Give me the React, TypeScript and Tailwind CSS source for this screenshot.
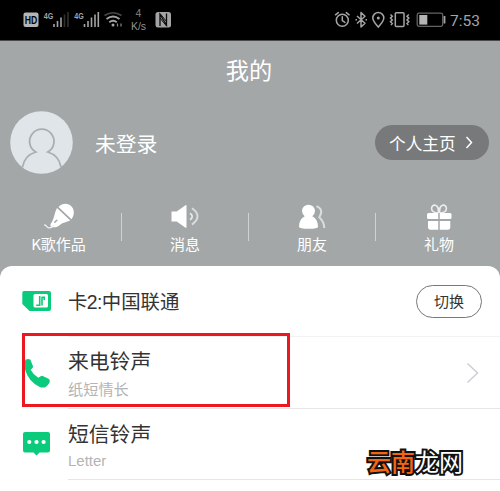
import React from 'react';

const StatusBar = () => (
  <div className="flex h-[41px] shrink-0 items-start justify-between border-b border-[#48494b] bg-black pl-[23px] pr-[16px] text-[#a4a4a4]">
    <svg width="150" height="40" viewBox="23 0 150 40" fill="none" stroke="currentColor">
      {/* HD */}
      <rect x="23.5" y="12.5" width="15" height="14.5" rx="2" fill="#b5b5b5" stroke="none" />
      <text x="31" y="23.8" textAnchor="middle" fontSize="10.5" fontWeight="700" fill="#050505" stroke="none" fontFamily="Liberation Sans, sans-serif" textLength="12.5" lengthAdjust="spacingAndGlyphs">HD</text>
      {/* First SIM */}
      <text x="43.8" y="18.5" fontSize="9.5" fontWeight="700" fill="currentColor" stroke="none" fontFamily="Liberation Sans, sans-serif" textLength="9.5" lengthAdjust="spacingAndGlyphs">4G</text>
      <g strokeWidth="1.6">
        <path d="M54 24v3M57.5 21v6M61 17.5V27" />
        <path d="M64.5 14.5V27M68 12v15" stroke="#303030" />
      </g>
      {/* Second SIM */}
      <text x="74.3" y="18.5" fontSize="9.5" fontWeight="700" fill="currentColor" stroke="none" fontFamily="Liberation Sans, sans-serif" textLength="9.5" lengthAdjust="spacingAndGlyphs">4G</text>
      <path d="M84.5 24v3M88 21v6M91.5 17.5V27M95 14.5V27M98.3 12v15" strokeWidth="1.6" />
      {/* Wifi */}
      <path d="M104.5 15.5q8.5-5.5 17 0" stroke="#484848" strokeWidth="1.5" />
      <path d="M106.5 19q6.5-5 13 0M109.3 22.2q3.700-3 7.500 0" strokeWidth="1.8" />
      <circle cx="113" cy="25" r="1.5" fill="currentColor" stroke="none" />
      <path d="M117.5 23.5v3M121 23.5v3" strokeWidth="1.2" stroke="#8a8a8a" />
      <text x="138.5" y="17" textAnchor="middle" fontSize="10.5" fill="#858585" stroke="none" fontFamily="Liberation Sans, sans-serif">4</text>
      <text x="138.5" y="30" textAnchor="middle" fontSize="10.5" fill="#929292" stroke="none" fontFamily="Liberation Sans, sans-serif">K/s</text>
      {/* NFC */}
      <rect x="155.5" y="12" width="15.5" height="15.5" rx="2.5" fill="currentColor" stroke="none" />
      <path d="M160 26V14.5L166.5 25V13.5" stroke="#0a0a0a" strokeWidth="1.3" />
      <path d="M160 13.5l6.5 8M160 18l6.5 8" stroke="#0a0a0a" strokeWidth="1" />
    </svg>
    <svg width="150" height="40" viewBox="334 0 150 40" fill="none" stroke="currentColor">
      {/* Alarm */}
      <g strokeWidth="1.5" strokeLinecap="round">
        <circle cx="342.3" cy="20.3" r="6" />
        <path d="M342.3 16.8v3.8l2.6 1.8M335.5 14.8l2.8-2.2M349.1 14.8l-2.8-2.2" />
      </g>
      {/* Bluetooth */}
      <path d="M357 16l8 7.3-4 3.7V12.5l4 3.7-8 7.3" strokeWidth="1.5" strokeLinejoin="round" />
      <path d="M355.5 19.8h1.5M365.5 19.8h1.5" strokeWidth="1.5" />
      {/* Location */}
      <path d="M378.3 27c-2-2.7-5.5-5.5-5.5-9a5.5 5.5 0 0 1 11 0c0 3.5-3.5 6.3-5.5 9z" strokeWidth="1.5" />
      <circle cx="378.3" cy="18" r="1.5" fill="currentColor" stroke="none" />
      {/* Vibrate */}
      <rect x="395.3" y="12.8" width="8.7" height="13.7" rx="1" strokeWidth="1.5" />
      <path d="M390.5 14.5l1.8 1.8-1.8 1.8 1.8 1.8-1.8 1.8 1.8 1.8-1.3 1.6M408.8 14.5l-1.8 1.8 1.8 1.8-1.8 1.8 1.8 1.8-1.8 1.8 1.3 1.6" strokeWidth="1.5" />
      {/* Battery */}
      <rect x="417.2" y="13.2" width="25.5" height="13.2" rx="1.8" strokeWidth="1.3" stroke="#646464" />
      <rect x="419.3" y="15" width="8" height="9.6" fill="#b5b5b5" stroke="none" />
      <path d="M444.5 16v7.5" strokeWidth="1.8" />
      <text x="450" y="25.8" fontSize="15.5" fill="#a4a4a4" stroke="none" fontFamily="Roboto, sans-serif">7:53</text>
    </svg>
  </div>
);

const MicIcon = () => (
  <svg width="32" height="28" viewBox="42 203 32 28" fill="none">
    <path d="M57.5 207C61.5 202.5 67.500 203 70.5 206.500C73.700 210 73.500 215.300 70.500 219.300z" fill="#fff" />
    <path d="M56 208L69.300 220.500C65.500 222 61.500 222.700 59.500 224.500C57 227 54 227.600 51.500 227.200C48.800 226.800 49 224.500 50.500 222.500C53.300 218.500 53.500 212.500 56 208z" fill="#fff" />
    <path d="M53.800 222.300l2-2" stroke="#a3a7a8" strokeWidth="1.5" strokeLinecap="round" />
    <path d="M52.5 225.5q-2 2.500-4.500 2.300c-2.500-.2-2.200-2.500-4.300-2.800" stroke="#f0f1f1" strokeWidth="1.3" strokeLinecap="round" />
  </svg>
);

const SpeakerIcon = () => (
  <svg width="32" height="28" viewBox="169 203 32 28" fill="none">
    <path d="M171.5 211.5h5.2L185.5 205.2q1-.5 1 .6v21.4q0 1-1 .5l-8.8-6.2h-5.2z" fill="#fff" />
    <path d="M190 213.3q4.5 3.200 0 6.500" stroke="#e6e8e8" strokeWidth="1.8" />
    <path d="M192 208.3q11 7.700 0 16.300" stroke="#d9dbdc" strokeWidth="2" />
  </svg>
);

const FriendsIcon = () => (
  <svg width="32" height="28" viewBox="296 203 32 28" fill="none">
    <path d="M304.7 216.2q-2.7-2.3-2.7-5.500a6.500 6 0 0 1 13 0q0 3.200-2.700 5.500q5.700 2.800 5.700 10.500q0 2-9.300 2t-9.700-2q0-7.700 5.700-10.500z" fill="#fff" />
    <path d="M316.5 206.2q7.800 3.300 2.800 11q4.800 4.500 5 10.800" stroke="#dadcdd" strokeWidth="2" />
  </svg>
);

const GiftIcon = () => (
  <svg width="32" height="28" viewBox="423 203 32 28" fill="none">
    <path d="M438.5 213c-10-.5-7.500-9-3-7.800 3 .8 3 4 3 7.800zM439.500 213c10-.5 7.500-9 3-7.800-3 .8-3 4-3 7.800z" stroke="#eceded" strokeWidth="1.6" />
    <rect x="427" y="213" width="24.5" height="6" rx="1.5" fill="#fff" />
    <path d="M428 221h22.300v6q0 2.800-2.500 2.800h-17.300q-2.500 0-2.500-2.800z" fill="#fff" />
    <path d="M439 213v17" stroke="#a3a7a8" strokeWidth="1.5" />
  </svg>
);

const tabs = [
  { label: 'K歌作品', icon: <MicIcon /> },
  { label: '消息', icon: <SpeakerIcon /> },
  { label: '朋友', icon: <FriendsIcon /> },
  { label: '礼物', icon: <GiftIcon /> },
];

const Header = () => (
  <header className="h-[225px] shrink-0 text-white">
    <h1 className="pt-[12px] text-center text-[23.2px] leading-[32px] pr-[2px]">我的</h1>
    <div className="mt-[26px] flex h-[63px] items-center pl-[10px] pr-[11px]">
      <svg className="h-[63px] w-[63px]" viewBox="0 0 63 63" fill="none">
        <circle cx="31.5" cy="31.5" r="31.3" fill="#e0e5e9" />
        <path d="M12.5 56q2-11.500 13.300-15a12.200 12.200 0 1 1 12 0q11.200 3.500 13.200 15" stroke="#a8afb2" strokeWidth="1.8" />
      </svg>
      <span className="ml-[22px] text-[20.8px] leading-[30px]">未登录</span>
      <button className="ml-auto flex h-[35px] w-[114px] items-center rounded-full bg-[#78797b] pl-[14px] text-[16.7px] leading-[24px]">
        个人主页
        <svg className="ml-[9px]" width="8" height="13" viewBox="0 0 8 13" fill="none">
          <path d="M1.5 1l5 5.5-5 5.5" stroke="white" strokeWidth="1.5" />
        </svg>
      </button>
    </div>
    <nav className="mt-[29px] flex items-start">
      {tabs.map((tab, i) => (
        <React.Fragment key={tab.label}>
          {i > 0 && <div className="mt-[10px] h-[28px] w-px shrink-0 bg-[#d0d2d3]" />}
          <div className={i === 0 ? 'flex w-[121px] shrink-0 flex-col items-center pr-[4px]' : 'flex w-[126px] shrink-0 flex-col items-center'}>
            {tab.icon}
            <span className="mt-[3px] text-[15px] leading-[20px]">{tab.label}</span>
          </div>
        </React.Fragment>
      ))}
    </nav>
  </header>
);

const SimIcon = () => (
  <svg width="30" height="22" viewBox="22 290 30 22" fill="none">
    <path d="M24 291h25q2 0 2 2v16q0 2-2 2H29.500L22.300 304V293q0-2 1.700-2z" fill="#0acb7b" />
    <rect x="33.5" y="294" width="14.5" height="13.5" rx="1.5" fill="white" />
    <path d="M39.7 296v9.200h-3.500M42 305.500V296.800M42 297.300h3M44.200 300v-3" stroke="#0acb7b" strokeWidth="1.6" />
  </svg>
);

const PhoneIcon = () => (
  <svg width="28" height="32" viewBox="24 356 28 32">
    <path d="M25.5 358.8q3.500-1.700 5 .3l2.300 5.600q.7 1.800-1 3l-1.200 1q2.800 5.200 7.700 8l2-1.300q1.500-1 3-.2l5.200 2.500q2.200 1.500.7 4.200-3.200 6-9 4.300Q28.500 381 25 368.500q-1.500-7 .5-9.700z" fill="#0acb7b" />
  </svg>
);

const MessageIcon = () => (
  <svg width="28" height="26" viewBox="23 431 28 26">
    <path d="M25 432h23q2 0 2 2v16.500q0 2-2 2h-8.500L36.500 455.500l-3-3H25q-2 0-2-2V434q0-2 2-2z" fill="#0acb7b" />
    <circle cx="29.3" cy="442" r="2.1" fill="white" />
    <circle cx="36.5" cy="442" r="2.1" fill="white" />
    <circle cx="43.6" cy="442" r="2.1" fill="white" />
  </svg>
);

const App = () => {
  return (
    <main className="relative flex h-[491px] w-[500px] flex-col overflow-hidden bg-[#a3a7a8] font-['Noto_Sans_CJK_SC',sans-serif]">
      <StatusBar />
      <Header />

      <section className="flex-1 rounded-t-[12px] bg-white text-[#333]">
        <div className="flex h-[70px] items-center pl-[22px] pr-[18px]">
          <SimIcon />
          <span className="ml-[16px] pt-[2px] font-['Liberation_Sans','Noto_Sans_CJK_SC',sans-serif] text-[19.4px] leading-[28px] tracking-[-0.6px]">
            卡2:<span className="tracking-normal">中国联通</span>
          </span>
          <button className="ml-auto h-[33px] w-[66px] rounded-full border border-[#777] text-[15px] leading-[30px]">切换</button>
        </div>
        <div className="ml-[68px] h-px bg-[#f2f3f3]" />
        <div className="flex h-[71px] items-center pl-[24px] pr-[21px]">
          <PhoneIcon />
          <div className="ml-[16px] flex flex-col">
            <span className="text-[20.8px] leading-[30px]">来电铃声</span>
            <span className="mt-[1px] text-[15.2px] leading-[24px] text-[#b4b4b4]">纸短情长</span>
          </div>
          <svg className="ml-auto" width="13" height="22" viewBox="0 0 13 22" fill="none">
            <path d="M1.5 1.5l10 9.5-10 9.5" stroke="#c8d0d5" strokeWidth="1.5" />
          </svg>
        </div>
        <div className="ml-[68px] h-px bg-[#e6e6e6]" />
        <div className="flex h-[70px] items-center pl-[23px]">
          <MessageIcon />
          <div className="ml-[17px] flex flex-col pt-[2px]">
            <span className="text-[20.8px] leading-[30px]">短信铃声</span>
            <span className="mt-[1px] font-['Liberation_Sans',sans-serif] text-[15px] leading-[24px] text-[#b4b4b4]">Letter</span>
          </div>
        </div>
        <div className="ml-[68px] h-px bg-[#e6e6e6]" />
      </section>

      {/* Highlight around the ringtone row */}
      <div className="absolute left-[22px] top-[333px] h-[74px] w-[268px] border-[3px] border-[#ed1722]" />

      {/* Watermark */}
      <div className="absolute left-[367px] top-[444px] text-[24px] font-normal leading-[34px] text-white [-webkit-text-stroke:4px_#111] [paint-order:stroke_fill]">
        <span className="font-medium text-[#f36511]">云南</span>龙网
      </div>
    </main>
  );
};

export default App;
